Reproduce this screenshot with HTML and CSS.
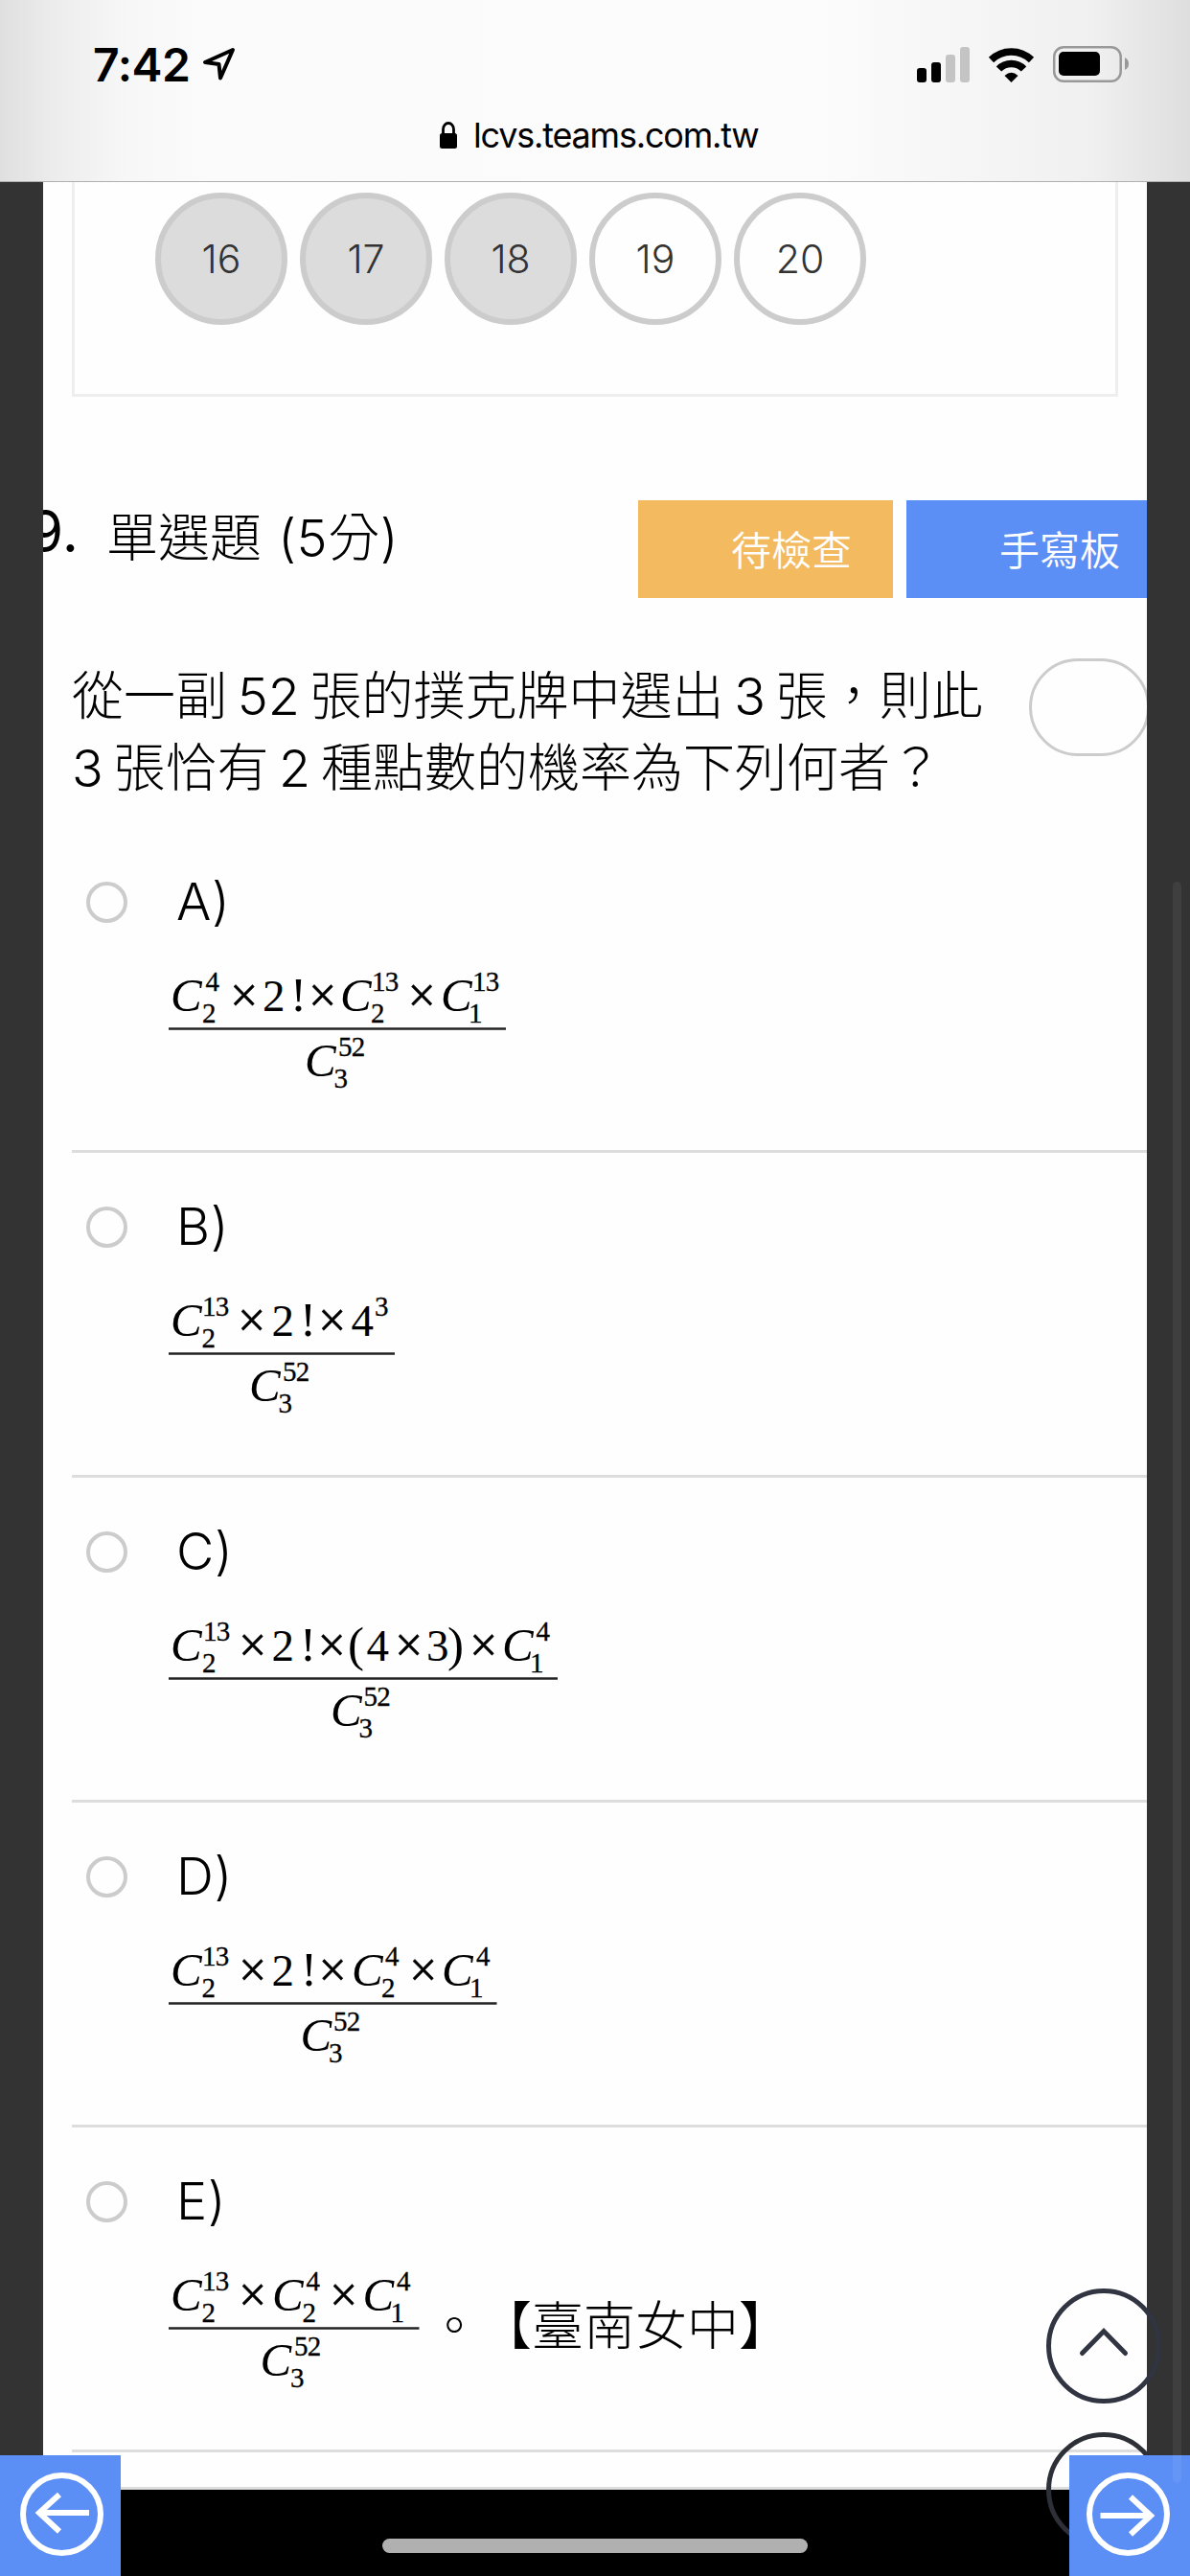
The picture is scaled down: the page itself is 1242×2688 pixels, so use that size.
FILE: index.html
```html
<!DOCTYPE html>
<html lang="zh-Hant">
<head>
<meta charset="utf-8">
<title>lcvs.teams.com.tw</title>
<link rel="stylesheet" href="styles.css">
</head>
<body>
<header class="browser">
  <div class="status">
    <span class="clock">7:42</span>
    <svg class="locate" width="36" height="36" viewBox="0 0 36 36"><path d="M33 3 L4 16 L18.500 18 L20 32.500 Z" fill="none" stroke="#000" stroke-width="4" stroke-linejoin="round"/></svg>
    <svg class="signals" width="224" height="40" viewBox="0 0 224 40">
      <rect x="1" y="24" width="10" height="15" rx="3"/>
      <rect x="16" y="18" width="10" height="21" rx="3"/>
      <rect x="31" y="10" width="10" height="29" rx="3" fill="#c4c4c4"/>
      <rect x="46" y="2" width="10" height="37" rx="3" fill="#c4c4c4"/>
      <g fill="none" stroke="#000" stroke-width="7.500">
        <path d="M78.500 15.500 A30 30 0 0 1 120.500 15.500"/>
        <path d="M86.500 25 A18 18 0 0 1 112.500 25"/>
      </g>
      <path d="M92.500 32 Q99.500 25.500 106.500 32 L99.500 39 Z"/>
      <rect x="144.200" y="2.200" width="69.500" height="35.500" rx="10" fill="none" stroke="#999" stroke-width="2.500"/>
      <rect x="149" y="7" width="43" height="25" rx="5"/>
      <path d="M218 13 Q222 15 222 19.500 Q222 24 218 26 Z" fill="#999"/>
    </svg>
  </div>
  <div class="address">
    <svg width="20" height="28" viewBox="0 0 20 28"><path d="M4.500 13 V8 A5.500 6.500 0 0 1 15.500 8 V13" fill="none" stroke="#000" stroke-width="2.800"/><rect x="1" y="12" width="18" height="16" rx="2.500"/></svg>
    <span>lcvs.teams.com.tw</span>
  </div>
</header>
<main class="sheet">
  <section class="numbers">
    <span class="num done">16</span><span class="num done">17</span><span class="num done">18</span><span class="num">19</span><span class="num">20</span>
  </section>
  <section class="heading">
    <span class="index">9.</span>
    <h1>單選題 <span class="points">(5分)</span></h1>
    <button class="tool review">待檢查</button>
    <button class="tool board">手寫板</button>
  </section>
  <section class="question">
    <p>從一副 52 張的撲克牌中選出 3 張，則此<br>3 張恰有 2 種點數的機率為下列何者？</p>
    <span class="answer"></span>
  </section>
  <ol class="options">
    <li>
      <div class="pick"><i class="radio"></i><span>A)</span></div>
      <div class="formula">
        <svg width="354" height="150" viewBox="0 0 354 150">
          <path class="bar" d="M0 73.500 H352"/>
          <text y="55"><tspan class="c" x="2">C</tspan><tspan x="98">2</tspan><tspan class="b" x="127">!</tspan><tspan class="c" x="179">C</tspan><tspan class="c" x="284">C</tspan></text>
          <text class="x" y="56"><tspan x="64">×</tspan><tspan x="146">×</tspan><tspan x="249.500">×</tspan></text>
          <text class="s" y="34"><tspan x="38.500">4</tspan><tspan x="212">13</tspan><tspan x="317">13</tspan></text>
          <text class="s" y="66.500"><tspan x="35">2</tspan><tspan x="211">2</tspan><tspan x="313">1</tspan></text>
          <text class="c" x="142" y="123">C</text><text class="s" x="177" y="102">52</text><text class="s" x="172.500" y="135">3</text>
        </svg>
      </div>
    </li>
    <li>
      <div class="pick"><i class="radio"></i><span>B)</span></div>
      <div class="formula">
        <svg width="238" height="150" viewBox="0 0 238 150">
          <path class="bar" d="M0 73.500 H236"/>
          <text y="55"><tspan class="c" x="2">C</tspan><tspan x="107.500">2</tspan><tspan class="b" x="137">!</tspan><tspan x="190.500">4</tspan></text>
          <text class="x" y="56"><tspan x="72">×</tspan><tspan x="156">×</tspan></text>
          <text class="s" y="34"><tspan x="35">13</tspan><tspan x="215">3</tspan></text>
          <text class="s" y="66.500"><tspan x="34.500">2</tspan></text>
          <text class="c" x="84" y="123">C</text><text class="s" x="119" y="102">52</text><text class="s" x="114.500" y="135">3</text>
        </svg>
      </div>
    </li>
    <li>
      <div class="pick"><i class="radio"></i><span>C)</span></div>
      <div class="formula">
        <svg width="408" height="150" viewBox="0 0 408 150">
          <path class="bar" d="M0 73.500 H406"/>
          <text y="55"><tspan class="c" x="2">C</tspan><tspan x="107.500">2</tspan><tspan class="b" x="137">!</tspan><tspan class="b" x="187">(</tspan><tspan x="206.500">4</tspan><tspan x="269">3</tspan><tspan class="b" x="291">)</tspan><tspan class="c" x="348">C</tspan></text>
          <text class="x" y="56"><tspan x="73">×</tspan><tspan x="155.500">×</tspan><tspan x="236">×</tspan><tspan x="314">×</tspan></text>
          <text class="s" y="34"><tspan x="36">13</tspan><tspan x="383.500">4</tspan></text>
          <text class="s" y="66.500"><tspan x="35">2</tspan><tspan x="377">1</tspan></text>
          <text class="c" x="169" y="123">C</text><text class="s" x="203.500" y="102">52</text><text class="s" x="198.500" y="135">3</text>
        </svg>
      </div>
    </li>
    <li>
      <div class="pick"><i class="radio"></i><span>D)</span></div>
      <div class="formula">
        <svg width="345" height="150" viewBox="0 0 345 150">
          <path class="bar" d="M0 73.500 H342.500"/>
          <text y="55"><tspan class="c" x="2">C</tspan><tspan x="107.500">2</tspan><tspan class="b" x="138">!</tspan><tspan class="c" x="191">C</tspan><tspan class="c" x="285">C</tspan></text>
          <text class="x" y="56"><tspan x="73">×</tspan><tspan x="156.500">×</tspan><tspan x="251">×</tspan></text>
          <text class="s" y="34"><tspan x="35">13</tspan><tspan x="226">4</tspan><tspan x="321">4</tspan></text>
          <text class="s" y="66.500"><tspan x="34.500">2</tspan><tspan x="222">2</tspan><tspan x="314">1</tspan></text>
          <text class="c" x="137.500" y="123">C</text><text class="s" x="172" y="102">52</text><text class="s" x="167" y="135">3</text>
        </svg>
      </div>
    </li>
    <li>
      <div class="pick"><i class="radio"></i><span>E)</span></div>
      <div class="formula">
        <svg width="271" height="150" viewBox="0 0 271 150">
          <path class="bar" d="M0 73.500 H261.500"/>
          <text y="55"><tspan class="c" x="2">C</tspan><tspan class="c" x="108">C</tspan><tspan class="c" x="202.500">C</tspan></text>
          <text class="x" y="56"><tspan x="73">×</tspan><tspan x="168">×</tspan></text>
          <text class="s" y="34"><tspan x="35">13</tspan><tspan x="143.500">4</tspan><tspan x="238">4</tspan></text>
          <text class="s" y="66.500"><tspan x="34.500">2</tspan><tspan x="139.500">2</tspan><tspan x="231.500">1</tspan></text>
          <text class="c" x="95.500" y="123">C</text><text class="s" x="131" y="102">52</text><text class="s" x="127" y="135">3</text>
        </svg>
        <span class="source">。【臺南女中】</span>
      </div>
    </li>
  </ol>
</main>
<footer class="home"><span></span></footer>
<svg class="jump up" width="120" height="120" viewBox="0 0 120 120"><circle cx="60" cy="60" r="57.500"/><path d="M37.500 67.500 L60 44.500 L82.500 67.500"/></svg>
<svg class="jump down" width="120" height="120" viewBox="0 0 120 120"><circle cx="60" cy="60" r="57.500"/><path d="M37.500 52.500 L60 75.500 L82.500 52.500"/></svg>
<div class="page prev"><svg width="126" height="126" viewBox="0 0 126 126"><circle cx="64.500" cy="61.500" r="40.500"/><path d="M93 60 H40 M62 41 L41 60 L62 79.500"/></svg></div>
<div class="page next"><svg width="126" height="126" viewBox="0 0 126 126"><circle cx="61.500" cy="61.500" r="40.500"/><path d="M32.500 63 H86 M64 43.500 L85 63 L64 82.500"/></svg></div>
<div class="scrollbar"></div>
</body>
</html>
```
FILE: styles.css
```css
* { box-sizing: border-box; }
body {
  margin: 0;
  width: 1242px;
  height: 2688px;
  position: relative;
  overflow: hidden;
  background: #333;
  color: #000;
  font-family: Inter, "Noto Sans CJK TC", sans-serif;
  display: flex;
  flex-direction: column;
}
svg { display: block; flex: none; }

.browser {
  flex: none;
  height: 190px;
  border-bottom: 1px solid #b0b0b0;
  background: linear-gradient(90deg, #dfdfdf 0, #ececec 55px, #f7f7f7 130px, #fbfbfb 220px, #fcfcfc 850px, #f7f7f7 980px, #f0f0f0 1140px, #dedede 1242px);
}
.status { display: flex; height: 108px; padding: 47px 0 0 97px; }
.clock { width: 113px; font-size: 48px; line-height: 41px; font-weight: 600; letter-spacing: -0.4px; }
.locate { margin-top: 2px; }
.signals { margin-left: 710px; }
.address { display: flex; padding: 19px 0 0 458px; }
.address span { margin-left: 16px; font-size: 36px; line-height: 44px; margin-top: -8px; letter-spacing: -1.2px; white-space: nowrap; }

.sheet {
  flex: none;
  width: 1152px;
  height: 2408px;
  margin-left: 45px;
  padding-left: 30px;
  overflow: hidden;
  background: #fefefe;
  border-bottom: 3px solid #dcdcdc;
}
.numbers {
  display: flex;
  gap: 13px;
  width: 1092px;
  height: 224px;
  padding: 11px 0 0 84px;
  border: 3px solid #eee;
  border-top: 0;
}
.num {
  width: 138px;
  height: 138px;
  border: 6px solid #ccc;
  border-radius: 50%;
  color: #333;
  font-size: 41px;
  font-weight: 350;
  line-height: 126px;
  text-align: center;
}
.done { background: #dcdcdc; }

.heading { display: flex; height: 273px; padding-top: 108px; width: 1200px; }
.index { margin-left: -46px; width: 82px; font-size: 60px; line-height: 72px; margin-top: -4px; flex: none; }
h1 { margin: 0; width: 555px; font-size: 54px; font-weight: 300; line-height: 80px; white-space: nowrap; flex: none; }
.points { margin-left: 2px; letter-spacing: 0.6px; }
.tool {
  flex: none;
  width: 266px;
  height: 102px;
  margin: 0 14px 0 0;
  padding: 0 0 3px 54px;
  border: 0;
  color: #fff;
  font: 350 42px/99px "Noto Sans CJK TC", sans-serif;
}
.review { background: #f3ba5f; }
.board { background: #5c8ff5; }

.question { display: flex; height: 177px; width: 1200px; }
.question p { margin: 2px 0 0; width: 999px; font-size: 54px; font-weight: 300; line-height: 75px; white-space: nowrap; word-spacing: -4.5px; }
.answer { width: 126px; height: 102px; border: 3px solid #ccc; border-radius: 51px; }

.options { margin: 0; padding: 0; list-style: none; }
.options li { height: 339px; border-bottom: 3px solid #ddd; }
.pick { display: flex; height: 147px; padding: 56px 0 0 15px; }
.radio { width: 43px; height: 43px; border: 4px solid #ccc; border-radius: 50%; }
.pick span { margin: -15px 0 0 51px; font-size: 54px; font-weight: 300; line-height: 72px; letter-spacing: 0.6px; }
.formula { display: flex; padding-left: 101px; }
.formula svg { margin-top: -11px; }
.formula text { font-family: "Liberation Serif", serif; font-size: 47px; }
.formula .c { font-size: 49px; font-style: italic; }
.formula .b { font-size: 51px; }
.formula .x { font-size: 52px; stroke: #000; stroke-width: 0.5px; }
.formula .s { font-size: 29px; letter-spacing: -0.8px; stroke: #000; stroke-width: 0.3px; }
.bar { stroke: #222; stroke-width: 2.500; }
.source { font-size: 54px; font-weight: 300; line-height: 72px; margin-top: 25px; text-spacing-trim: space-all; font-feature-settings: "chws" 0; }

.home { flex: 1; background: #000; padding: 51px 0 0 399px; }
.home span { display: block; width: 444px; height: 15px; border-radius: 8px; background: #b0b0b0; }
.jump { position: absolute; left: 1092px; fill: none; stroke: #303541; stroke-width: 5; stroke-linecap: round; }
.up { top: 2388px; }
.down { top: 2538px; stroke: #2e3037; }
.page { position: absolute; top: 2562px; width: 126px; height: 126px; background: #5c8ff5; fill: none; stroke: #fff; stroke-width: 6; }
.prev { left: 0; }
.next { left: 1116px; }
.scrollbar { position: absolute; left: 1224px; top: 920px; width: 9px; height: 1671px; border-radius: 5px; background: rgba(255, 255, 255, .06); }
```
